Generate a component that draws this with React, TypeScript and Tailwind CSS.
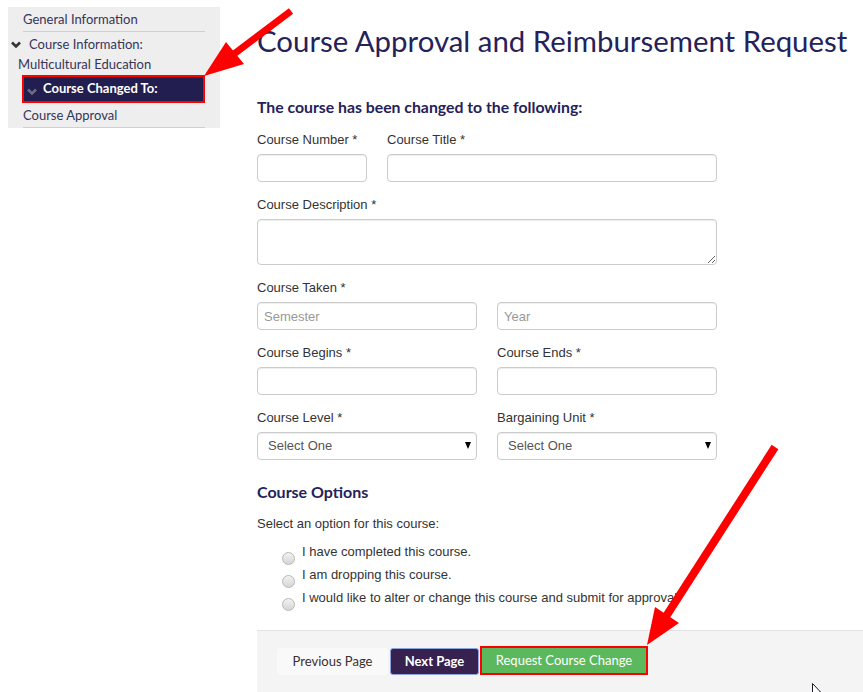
import React from "react";

const lato = "font-['Lato','Liberation_Sans',sans-serif]";
const arial = "font-['Liberation_Sans','Arial',sans-serif]";

function Chevron({ className }: { className?: string }) {
  return (
    <svg viewBox="0 0 10 8" className={className} aria-hidden>
      <path d="M1 1.5 L5 5.5 L9 1.5" fill="none" stroke="currentColor" strokeWidth="2.6" strokeLinecap="butt" />
    </svg>
  );
}

function Label({ children }: { children: React.ReactNode }) {
  return <div className={`${arial} pt-[1px] text-[13px] leading-[18px] text-[#333] mb-[5px]`}>{children}</div>;
}

const inputCls =
  "block h-[28px] rounded-[4px] border border-[#ccc] bg-white shadow-[inset_0_1px_1px_rgba(0,0,0,0.075)] px-[6px] text-[13px] text-[#555] outline-none placeholder:text-[#999] font-['Liberation_Sans','Arial',sans-serif]";

function Select() {
  return (
    <div className="relative w-[220px] h-[28px]">
      <select className={`${inputCls} w-full appearance-none pl-[10px] text-[#333]`} defaultValue="">
        <option value="">Select One</option>
      </select>
      <span className="pointer-events-none absolute right-[6px] top-[10px] w-0 h-0 border-l-[3.5px] border-r-[3.5px] border-t-[7px] border-l-transparent border-r-transparent border-t-black" />
    </div>
  );
}

function Radio({ children }: { children: React.ReactNode }) {
  return (
    <div className={`${arial} flex items-start h-[23px] text-[13px] leading-[23px] text-[#333]`}>
      <span className="mt-[6px] mr-[7px] w-[13px] h-[13px] rounded-full border border-[#b8b8b8] bg-gradient-to-b from-[#f2f2f2] to-[#d6d6d6] shrink-0 translate-y-[6px]" />
      <span>{children}</span>
    </div>
  );
}

export default function App() {
  return (
    <div className="relative w-[863px] h-[692px] overflow-hidden bg-white">
      <div className="flex">
        {/* Sidebar */}
        <div className={`${lato} ml-[8px] mt-[7px] w-[212px] self-start bg-[#eeeeee] text-[13px] text-[#36355a]`}>
          <div className="mx-[15px] h-[25px] leading-[24px] border-b border-[#cfcfcf]">General Information</div>
          <div className="pt-[2px] pb-[1px]">
            <div className="flex items-center h-[20px] leading-[20px] pl-[3px]">
              <Chevron className="w-[10px] h-[8px] text-[#333] mr-[8px] mt-[2px]" />
              <span>Course Information:</span>
            </div>
            <div className="h-[20px] leading-[20px] pl-[10px]">Multicultural Education</div>
          </div>
          <div className="ml-[14px] mr-[15px] h-[28px] bg-[#221e50] border-2 border-[#ff0000] flex items-center pl-[3px]">
            <Chevron className="w-[10px] h-[8px] text-[#6c6a80] mr-[6px] mt-[5px]" />
            <span className="text-white font-bold">Course Changed To:</span>
          </div>
          <div className="mx-[15px] h-[25px] leading-[24px] border-b border-[#cfcfcf]">Course Approval</div>
        </div>

        {/* Main */}
        <div className="ml-[37px] flex-1 flex flex-col">
          <h1 className={`${lato} mt-[23px] text-[29.4px] leading-[36px] text-[#25225a] font-normal whitespace-nowrap`}>
            Course Approval and Reimbursement Request
          </h1>
          <h2 className={`${lato} mt-[38px] text-[15.8px] leading-[19px] font-bold text-[#25225a]`}>
            The course has been changed to the following:
          </h2>

          <div className="w-[460px] mt-[14px]">
            <div className="flex gap-[20px]">
              <div className="w-[110px]">
                <Label>Course Number *</Label>
                <input className={`${inputCls} w-[110px]`} />
              </div>
              <div className="flex-1">
                <Label>Course Title *</Label>
                <input className={`${inputCls} w-full`} />
              </div>
            </div>

            <div className="mt-[13px]">
              <Label>Course Description *</Label>
              <textarea className={`${inputCls} w-full h-[46px] py-[4px]`} />
            </div>

            <div className="mt-[13px]">
              <Label>Course Taken *</Label>
              <div className="flex gap-[20px]">
                <input className={`${inputCls} w-[220px]`} placeholder="Semester" />
                <input className={`${inputCls} w-[220px]`} placeholder="Year" />
              </div>
            </div>

            <div className="mt-[13px] flex gap-[20px]">
              <div className="w-[220px]">
                <Label>Course Begins *</Label>
                <input className={`${inputCls} w-[220px]`} />
              </div>
              <div className="w-[220px]">
                <Label>Course Ends *</Label>
                <input className={`${inputCls} w-[220px]`} />
              </div>
            </div>

            <div className="mt-[13px] flex gap-[20px]">
              <div className="w-[220px]">
                <Label>Course Level *</Label>
                <Select />
              </div>
              <div className="w-[220px]">
                <Label>Bargaining Unit *</Label>
                <Select />
              </div>
            </div>
          </div>

          <h3 className={`${lato} mt-[22px] text-[16px] leading-[19px] font-bold text-[#25225a]`}>Course Options</h3>
          <div className={`${arial} mt-[14px] text-[13px] leading-[18px] text-[#333]`}>Select an option for this course:</div>
          <div className="mt-[7px] pl-[25px]">
            <Radio>I have completed this course.</Radio>
            <Radio>I am dropping this course.</Radio>
            <Radio>I would like to alter or change this course and submit for approval.</Radio>
          </div>

          {/* Footer */}
          <div className="mt-[21px] h-[62px] bg-[#f4f4f4] border-t border-[#e2e2e2] pt-[17px] pl-[20px] flex items-start">
            <button className={`${lato} h-[27px] w-[111px] rounded-[3px] bg-[#f9f9f9] text-[13px] text-[#3a3030]`}>
              Previous Page
            </button>
            <button className={`${lato} ml-[2px] h-[27px] w-[89px] rounded-[3px] bg-[#37214f] border border-[#8fa3dc] text-[13px] font-bold text-white`}>
              Next Page
            </button>
            <button className={`${lato} ml-[1px] -mt-[2px] h-[29px] w-[168px] bg-[#5cb85c] border-2 border-[#ff0000] text-[13px] text-white`}>
              Request Course Change
            </button>
          </div>
        </div>
      </div>

      {/* Annotation arrows overlay */}
      <svg className="absolute inset-0 pointer-events-none" width="863" height="692" viewBox="0 0 863 692">
        <line x1="291" y1="11" x2="230" y2="57" stroke="#ff0000" strokeWidth="7" />
        <polygon points="204,76 226,42 244,64" fill="#ff0000" />
        <line x1="775" y1="447" x2="665" y2="618" stroke="#ff0000" strokeWidth="8" />
        <polygon points="647,645 655,607 679,623" fill="#ff0000" />
        <path d="M812.5 683.5 L812.5 700 L816 696 L819 692 L822 693.5 Z" fill="#fff" stroke="#1a1a2a" strokeWidth="1" />
      </svg>
    </div>
  );
}
